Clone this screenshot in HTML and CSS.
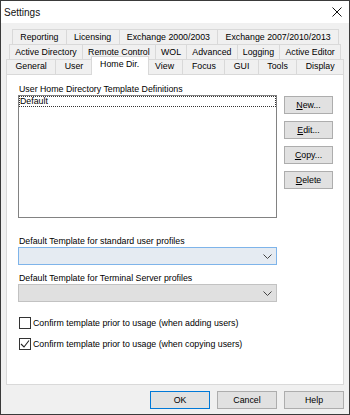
FILE: index.html
```html
<!DOCTYPE html>
<html lang="en">
<head>
  <meta charset="UTF-8">
  <title>Settings</title>
  <link rel="stylesheet" href="styles.css">
</head>
<body>
  <div class="window">
    <div class="titlebar">
      <span class="title">Settings</span>
      <svg class="close" width="10" height="10" viewBox="0 0 10 10">
        <path d="M0.5 0.5 L9.5 9.5 M9.5 0.5 L0.5 9.5" stroke="#111" stroke-width="1" fill="none"/>
      </svg>
    </div>

    <!-- tab strip, three rows like the old win32 tab control -->
    <div class="tabs">
      <div class="tab-row row1">
        <div class="tab">Reporting</div>
        <div class="tab">Licensing</div>
        <div class="tab">Exchange 2000/2003</div>
        <div class="tab">Exchange 2007/2010/2013</div>
      </div>
      <div class="tab-row row2">
        <div class="tab">Active Directory</div>
        <div class="tab">Remote Control</div>
        <div class="tab">WOL</div>
        <div class="tab">Advanced</div>
        <div class="tab">Logging</div>
        <div class="tab">Active Editor</div>
      </div>
      <div class="tab-row row3">
        <div class="tab">General</div>
        <div class="tab">User</div>
        <div class="tab active">Home Dir.</div>
        <div class="tab">View</div>
        <div class="tab">Focus</div>
        <div class="tab">GUI</div>
        <div class="tab">Tools</div>
        <div class="tab">Display</div>
      </div>
    </div>

    <div class="page">
      <div class="label">User Home Directory Template Definitions</div>
      <div class="list-area">
        <div class="listbox">
          <div class="item">Default</div>
        </div>
        <div class="side-buttons">
          <button class="btn"><u>N</u>ew...</button>
          <button class="btn"><u>E</u>dit...</button>
          <button class="btn"><u>C</u>opy...</button>
          <button class="btn"><u>D</u>elete</button>
        </div>
      </div>

      <div class="label gap-big">Default Template for standard user profiles</div>
      <div class="combo focused">
        <svg width="9" height="5" viewBox="0 0 9 5"><path d="M0.5 0.5 L4.5 4.5 L8.5 0.5" stroke="#444" fill="none"/></svg>
      </div>

      <div class="label gap-small">Default Template for Terminal Server profiles</div>
      <div class="combo disabled">
        <svg width="9" height="5" viewBox="0 0 9 5"><path d="M0.5 0.5 L4.5 4.5 L8.5 0.5" stroke="#444" fill="none"/></svg>
      </div>

      <div class="checks">
        <label class="check">
          <span class="box"></span>
          Confirm template prior to usage (when adding users)
        </label>
        <label class="check">
          <span class="box">
            <svg width="10" height="10" viewBox="0 0 10 10"><path d="M1 5 L4 8 L9 1.5" stroke="#222" stroke-width="1.1" fill="none"/></svg>
          </span>
          Confirm template prior to usage (when copying users)
        </label>
      </div>
    </div>

    <div class="footer">
      <button class="btn wide default">OK</button>
      <button class="btn wide">Cancel</button>
      <button class="btn wide">Help</button>
    </div>
  </div>
</body>
</html>
```

FILE: styles.css
```css
body {
  margin: 0;
  font-family: "Liberation Sans", Arial, sans-serif;
  font-size: 8.8px;
  color: #000;
}
.window {
  width: 350px;
  height: 415px;
  box-sizing: border-box;
  border: 1px solid #3a3a3a;
  background: #f0f0f0;
  display: flex;
  flex-direction: column;
}
.titlebar {
  height: 22px;
  flex: none;
  background: #fff;
  display: flex;
  align-items: center;
  justify-content: space-between;
  padding: 0 7px 0 3px;
}
.title {
  font-size: 10px;
  color: #111;
}
.close {
  display: block;
}

.tabs {
  flex: none;
  height: 51px;
  box-sizing: border-box;
  padding: 6px 5px 0;
}
.tab-row {
  display: flex;
  height: 16px;
}
.row1 {
  margin: 0 5px 0 6px;
}
.row2 {
  margin: -1px 3px 0;
}
.row3 {
  margin-top: -1px;
  height: 15px;
}
.tab {
  flex: auto;
  box-sizing: border-box;
  border: 1px solid #d9d9d9;
  margin-left: -1px;
  padding: 0 3px;
  background: #f0f0f0;
  text-align: center;
  line-height: 14px;
  white-space: nowrap;
}
.tab:first-child {
  margin-left: 0;
}
.row3 .tab {
  border-bottom: none;
  line-height: 13px;
}
.row3 .tab.active {
  position: relative;
  z-index: 1;
  margin: -3px -2px -1px;
  background: #fff;
  line-height: 15px;
}

.page {
  flex: 1;
  margin: 0 5px;
  background: #fff;
  border: 1px solid #d9d9d9;
  padding: 9px 0 0 11px;
}
.label {
  line-height: 11px;
  padding-left: 1px;
}
.gap-big {
  margin-top: 18px;
}
.gap-small {
  margin-top: 8px;
}
.list-area {
  display: flex;
  align-items: flex-start;
}
.listbox {
  width: 259px;
  height: 123px;
  box-sizing: border-box;
  border: 1px solid #828282;
  background: #fff;
}
.item {
  height: 11px;
  line-height: 11px;
  padding-left: 1px;
  outline: 1px dotted #333;
  outline-offset: -1px;
}
.side-buttons {
  display: flex;
  flex-direction: column;
  gap: 7px;
  margin: 1px 0 0 7px;
}
.btn {
  width: 49px;
  height: 18px;
  box-sizing: border-box;
  border: 1px solid #adadad;
  background: #e1e1e1;
  font-family: inherit;
  font-size: 8.8px;
  color: #000;
  padding: 0;
}
.btn u {
  text-decoration-thickness: 1px;
}

.combo {
  width: 259px;
  height: 18px;
  box-sizing: border-box;
  display: flex;
  align-items: center;
  justify-content: flex-end;
  padding-right: 4px;
}
.combo.focused {
  background: #e5ebf2;
  border: 1px solid #7eb4ea;
}
.combo.disabled {
  background: #e0e0e0;
  border: 1px solid #c2c2c2;
}

.checks {
  margin-top: 15px;
  display: flex;
  flex-direction: column;
  gap: 9px;
}
.check {
  display: flex;
  align-items: center;
  gap: 2px;
  height: 12px;
  padding-left: 1px;
}
.box {
  width: 12px;
  height: 12px;
  box-sizing: border-box;
  border: 1px solid #333;
  background: #fff;
  display: flex;
  align-items: center;
  justify-content: center;
}

.footer {
  flex: none;
  height: 29px;
  box-sizing: border-box;
  display: flex;
  justify-content: flex-end;
  gap: 7px;
  padding: 6px 5px 0 0;
}
.btn.wide {
  width: 60px;
}
.btn.default {
  border-color: #0078d7;
}
```
